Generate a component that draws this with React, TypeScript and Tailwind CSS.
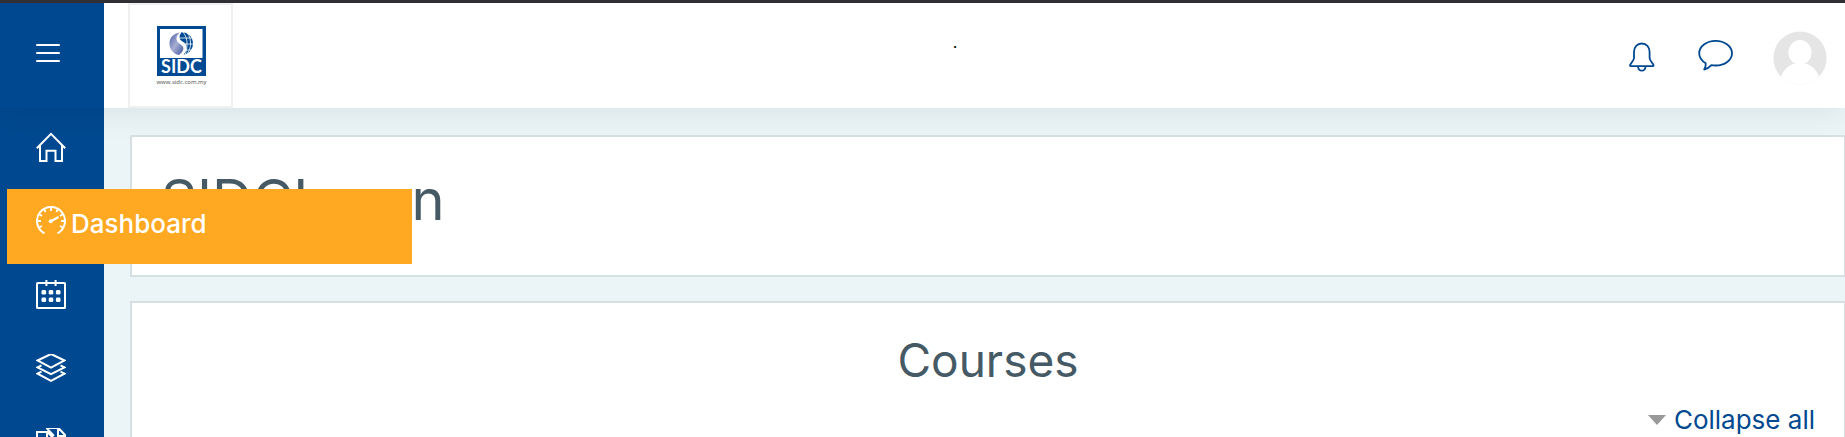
import type { ReactNode } from "react";

interface NavItem {
  label: string;
  active?: boolean;
  icon: ReactNode;
}

function Icon({ children }: { children: ReactNode }) {
  return (
    <svg
      viewBox="0 0 30 30"
      className="block size-[30px] shrink-0"
      fill="none"
      stroke="currentColor"
      strokeWidth="2"
      aria-hidden="true"
    >
      {children}
    </svg>
  );
}

const navItems: NavItem[] = [
  {
    label: "Home",
    icon: (
      <Icon>
        <path d="M.8 16.200 15 1.800l14.200 14.400M4 13.500V29h6.500V18.800h9V29H26V13.500" />
      </Icon>
    ),
  },
  {
    label: "Dashboard",
    active: true,
    icon: (
      <Icon>
        <path d="M8.500 27.400A14 14 0 1 1 21.500 27.400" />
        <path d="M15 1v4M8 3l1.600 3M22 3l-1.600 3M3 8l3 2M27 8l-3 2M1 15h4M29 15h-4M3 21.500l3-1.500M27 21.500l-3-1.500" strokeWidth="1.800" />
        <path d="m15 15.300 7.500-4.300" strokeWidth="2.200" />
        <circle cx="14.700" cy="15.300" r="2" fill="currentColor" stroke="none" />
      </Icon>
    ),
  },
  {
    label: "Calendar",
    icon: (
      <Icon>
        <rect x="1" y="3" width="28" height="25" rx=".6" />
        <path d="M10.400 0v6M19.600 0v6" />
        <g fill="currentColor" stroke="none">
          <rect x="5.500" y="10" width="4.600" height="4.600" rx="1.400" />
          <rect x="12.700" y="10" width="4.600" height="4.600" rx="1.400" />
          <rect x="19.900" y="10" width="4.600" height="4.600" rx="1.400" />
          <rect x="5.500" y="17.500" width="4.600" height="4.600" rx="1.400" />
          <rect x="12.700" y="17.500" width="4.600" height="4.600" rx="1.400" />
          <rect x="19.900" y="17.500" width="4.600" height="4.600" rx="1.400" />
        </g>
      </Icon>
    ),
  },
  {
    label: "Courses",
    icon: (
      <Icon>
        <path d="M15 0 1.500 6.500 15 13.600l13.500-7.100zM5.500 11.300l-4 2L15 20.200l13.500-6.900-4-2M5.500 17.600l-4 2L15 26.800l13.500-7.200-4-2" />
      </Icon>
    ),
  },
  {
    label: "Files",
    icon: (
      <Icon>
        <path d="M10.500 0h12l6.500 7v16H18M22 0v8h7M1 29V4h10.500L18 11v18zM11 4v8h7M10.500 0l7.500 8" />
      </Icon>
    ),
  },
];

function Logo() {
  return (
    <svg viewBox="0 0 52 60" className="h-[60px] w-[52px]" role="img" aria-label="SIDC">
      <defs>
        <linearGradient id="globe" x1="0" y1="0" x2="1" y2="1">
          <stop offset="0" stopColor="#4d5ea6" />
          <stop offset=".5" stopColor="#a7afd2" />
          <stop offset="1" stopColor="#3c55a0" />
        </linearGradient>
      </defs>
      <path fill="#004a93" d="M2 0h49v50H2z" />
      <path fill="#fff" d="M5 3h42.500v29H5z" />
      <path
        fill="url(#globe)"
        d="M25 6.500C18 7.500 14.500 12 14.500 17.500c0 6 4 10.500 9.500 11.500 4-3 5.500-6.500 3.500-9-2-2.300-6-3.500-6-7.500 0-2.500 1.500-4.500 3.500-6z"
      />
      <path
        fill="#004a93"
        d="M26.500 6.200C33 6.200 38 11 38 17.500c0 5.500-4 10.500-9.500 11.300 3-3.500 4-7.500 2-10.800-1.800-2.600-6-3.300-6-6.500 0-2 .8-3.800 2-5.300z"
      />
      <path
        fill="none"
        stroke="#fff"
        strokeWidth=".8"
        d="M24 12h13M29 18h10M30 24h7M28 6c3 4 4 7 4 12s-1 8-2 11M32 7c3 3 3.500 7 3.500 11s-1.500 7-3.500 10"
      />
      <text x="26.500" y="47" textAnchor="middle" className="fill-white font-['Lato'] text-[18px] font-bold">
        SIDC
      </text>
      <text x="26.500" y="58" textAnchor="middle" className="fill-[#4b4b4b] font-['Open_Sans'] text-[6px]">
        www.sidc.com.my
      </text>
    </svg>
  );
}

function Header() {
  return (
    <header className="relative z-10 flex h-[105px] shrink-0 bg-white shadow-[0_6px_30px_rgba(0,0,0,0.07)]">
      <div className="w-[104px] bg-[#004990] pl-9 pt-[41px] text-white">
        <button type="button" aria-label="Toggle menu" className="flex w-6 flex-col gap-[6px]">
          <span className="h-[2px] w-full rounded-full bg-white" />
          <span className="h-[2px] w-full rounded-full bg-white" />
          <span className="h-[2px] w-full rounded-full bg-white" />
        </button>
      </div>
      <a href="#" className="ml-6 flex w-[105px] items-start justify-center border-2 border-[#f0f0f1] pt-[21px]">
        <Logo />
      </a>
      <div className="flex-1 pl-12 pt-[27px] text-center text-base text-black">.</div>
      <div className="flex items-start pr-[18px] text-[#004990]">
        <button type="button" aria-label="Notifications" className="mt-[39px]">
          <svg viewBox="0 0 26 30" className="block h-[30px] w-[26px]" fill="none" stroke="currentColor" strokeWidth="1.800">
            <path d="M5 10C5 5 8.200 1.500 12.800 1.500S20.600 5 20.600 10v6c0 3.200 4 5.500 4 7.500 0 .6-.5.700-1 .7H2c-.5 0-1-.1-1-.7 0-2 4-4.300 4-7.500z" />
            <path d="M9 24.500c.3 2.700 1.800 4.200 3.800 4.200s3.500-1.500 3.800-4.200" />
          </svg>
        </button>
        <button type="button" aria-label="Messages" className="ml-[43px] mt-9">
          <svg viewBox="0 0 35 32" className="block h-[32px] w-[35px]" fill="none" stroke="currentColor" strokeWidth="1.800" strokeLinejoin="round">
            <path d="M17.500 1.800C8.500 1.800 1.200 7.300 1.200 14.200c0 4.300 2.600 7.600 6.500 10 .4 2-.3 4.300-1.500 6.300 3-.6 5.500-2.400 7.200-4.300 1.300.2 2.600.3 4.100.3 9.300 0 16.500-5.400 16.500-12.300S26.800 1.800 17.500 1.800z" />
          </svg>
        </button>
        <button type="button" aria-label="User menu" className="ml-10 mt-7">
          <svg viewBox="0 0 54 54" className="block size-[54px]">
            <defs>
              <clipPath id="avatar">
                <circle cx="27" cy="27" r="26.600" />
              </clipPath>
            </defs>
            <g clipPath="url(#avatar)">
              <path fill="#e5e5e5" d="M0 0h54v54H0z" />
              <ellipse cx="27" cy="21.500" rx="11.600" ry="12.500" fill="#fff" />
              <path fill="#fff" d="M6 54c1-11 7-18.500 14-21h14c7 2.500 13 10 14 21z" />
            </g>
          </svg>
        </button>
      </div>
    </header>
  );
}

function Sidebar() {
  return (
    <nav className="w-[104px] shrink-0 bg-[#004990] pt-[7px] text-white">
      <ul>
        {navItems.map((item) => (
          <li key={item.label} className={item.active ? "relative z-20 ml-[7px]" : "ml-[7px]"}>
            <a
              href="#"
              aria-label={item.label}
              className={
                item.active
                  ? "-mb-px flex h-[75px] w-[405px] gap-[5px] bg-[#ffa822] pl-[29px] pt-[17px]"
                  : "flex h-[74px] pl-[29px] pt-[17px]"
              }
            >
              {item.icon}
              {item.active && <span className="pt-[2px] text-[26px]/[32px] font-medium">{item.label}</span>}
            </a>
          </li>
        ))}
      </ul>
    </nav>
  );
}

export default function App() {
  return (
    <div className="flex h-screen flex-col overflow-hidden border-t-[3px] border-[#302f34] bg-[#ebf4f7] font-['Inter',sans-serif]">
      <Header />
      <div className="flex min-h-0 flex-1">
        <Sidebar />
        <main className="flex min-w-0 flex-1 flex-col gap-6 pl-[26px] pt-[27px] text-[#465a65]">
          <section className="h-[142px] shrink-0 border-2 border-r border-[#d6dfe2] bg-white px-[29px] pt-[27px]">
            <h1 className="text-[56px]/[72px]">SIDCLearn</h1>
          </section>
          <section className="flex-1 border-2 border-r border-b-0 border-[#d6dfe2] bg-white px-[29px] pt-[27px]">
            <h2 className="text-center text-[46px]/[60px]">Courses</h2>
            <div className="mt-3 flex justify-end">
              <button type="button" className="flex items-center gap-2 text-[26px]/[36px] text-[#004990]">
                <svg viewBox="0 0 18 10" className="h-[10px] w-[18px] fill-[#999]" aria-hidden="true">
                  <path d="M0 0h18L9 10z" />
                </svg>
                Collapse all
              </button>
            </div>
          </section>
        </main>
      </div>
    </div>
  );
}
